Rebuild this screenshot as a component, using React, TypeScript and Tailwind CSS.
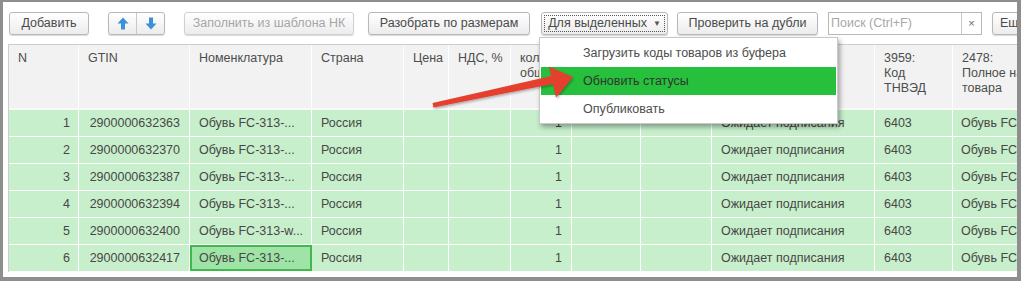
import React from "react";

const cols = [70, 111, 122, 92, 45, 62, 61, 69, 71, 163, 78, 200];

const headers: string[][] = [
  ["N"],
  ["GTIN"],
  ["Номенклатура"],
  ["Страна"],
  ["Цена"],
  ["НДС, %"],
  ["кол-во", "общее"],
  ["Сумма"],
  ["Сумма", "НДС"],
  ["Статус"],
  ["3959:", "Код", "ТНВЭД"],
  ["2478:", "Полное наименование", "товара"],
];

const rows = [
  ["1", "2900000632363", "Обувь FC-313-..."],
  ["2", "2900000632370", "Обувь FC-313-..."],
  ["3", "2900000632387", "Обувь FC-313-..."],
  ["4", "2900000632394", "Обувь FC-313-..."],
  ["5", "2900000632400", "Обувь FC-313-w..."],
  ["6", "2900000632417", "Обувь FC-313-..."],
];

function Btn({ children, className = "" }: { children: React.ReactNode; className?: string }) {
  return (
    <div
      className={
        "shrink-0 h-[23px] flex items-center justify-center rounded-[3px] border border-[#b8b8b8] bg-gradient-to-b from-[#ffffff] to-[#ececec] shadow-[0_1px_1px_rgba(0,0,0,0.15)] whitespace-nowrap " +
        className
      }
    >
      {children}
    </div>
  );
}

function ArrowIcon({ up }: { up: boolean }) {
  return (
    <svg width="12" height="13" viewBox="0 0 12 13" className={up ? "" : "rotate-180"}>
      <path d="M6 0.5 L11.5 6.5 L8 6.5 L8 12.5 L4 12.5 L4 6.5 L0.5 6.5 Z" fill="#3d8fd8" />
    </svg>
  );
}

export default function App() {
  return (
    <div className="w-[1024px] h-[283px] bg-white relative overflow-hidden" style={{ fontFamily: '"Liberation Sans", Arial, sans-serif' }}>
      <div className="w-[1021px] h-[281px] border-l-[3px] border-t-[2px] border-r-[4px] border-b-[4px] border-[#8e8e8e] bg-white relative overflow-hidden text-[12.5px] text-[#4a4a4a]">
        {/* Toolbar */}
        <div className="flex items-center pt-[10px] pl-[6px] h-[33px] w-[1100px]">
          <Btn className="w-[80px]">Добавить</Btn>
          <div className="shrink-0 ml-[19px] flex h-[23px] w-[57px] rounded-[3px] border border-[#b8b8b8] bg-gradient-to-b from-[#ffffff] to-[#ececec] shadow-[0_1px_1px_rgba(0,0,0,0.15)]">
            <div className="flex-1 flex items-center justify-center border-r border-[#c8c8c8]">
              <ArrowIcon up />
            </div>
            <div className="flex-1 flex items-center justify-center">
              <ArrowIcon up={false} />
            </div>
          </div>
          <Btn className="ml-[19px] w-[170px] text-[#a6a6a6] border-[#d0d0d0]">Заполнить из шаблона НК</Btn>
          <Btn className="ml-[14px] w-[162px]">Разобрать по размерам</Btn>
          <Btn className="ml-[11px] w-[127px] from-[#f4f4f4] to-[#e4e4e4] p-[2px]">
            <div className="w-full h-full flex items-center justify-center border border-dotted border-[#555]">
              Для выделенных
              <span className="ml-[6px] text-[8px] text-[#555]">▼</span>
            </div>
          </Btn>
          <Btn className="ml-[9px] w-[141px]">Проверить на дубли</Btn>
          <div className="shrink-0 ml-[10px] flex h-[23px] border border-[#b8b8b8] bg-white">
            <div className="w-[133px] flex items-center pl-[2px] text-[#a8a8a8] border-r border-[#c8c8c8]">Поиск (Ctrl+F)</div>
            <div className="w-[19px] flex items-center justify-center text-[11px] text-[#666]">×</div>
          </div>
          <Btn className="ml-[10px] w-[60px] justify-start pl-[7px]">Ещё</Btn>
        </div>

        {/* Table */}
        <div className="mt-[9px] ml-[5px] border-t border-l border-[#cdcdcd] overflow-hidden">
          <div className="flex h-[65px] bg-[#f2f2f2] border-b-2 border-[#fafafa]">
            {headers.map((h, i) => (
              <div
                key={i}
                className="shrink-0 border-r border-white pl-[9px] pt-[6px] leading-[15px] whitespace-nowrap overflow-hidden text-[#4d4d4d]"
                style={{ width: cols[i] }}
              >
                {h.map((l, j) => (
                  <div key={j}>{l}</div>
                ))}
              </div>
            ))}
          </div>
          {rows.map((r, ri) => (
            <div key={ri} className="flex h-[27px] bg-[#c7efcb] border-b border-white">
              {cols.map((w, ci) => {
                let content: React.ReactNode = null;
                let cls = "pl-[9px]";
                if (ci === 0) {
                  content = r[0];
                  cls = "justify-end pr-[8px]";
                } else if (ci === 1) {
                  content = r[1];
                  cls = "justify-end pr-[9px]";
                } else if (ci === 2) {
                  content = r[2];
                } else if (ci === 3) content = "Россия";
                else if (ci === 6) {
                  content = "1";
                  cls = "justify-end pr-[9px]";
                } else if (ci === 9) content = "Ожидает подписания";
                else if (ci === 10) content = "6403";
                else if (ci === 11) {
                  content = "Обувь FC-313-wmn-black-36";
                  cls = "pl-[8px]";
                }
                const selected = ri === 5 && ci === 2;
                return (
                  <div
                    key={ci}
                    className={
                      "shrink-0 flex items-center whitespace-nowrap overflow-hidden border-r border-white text-[#474747] " +
                      cls +
                      (selected ? " bg-[#9fe3a6] outline outline-2 -outline-offset-2 outline-[#3dba4b]" : "")
                    }
                    style={{ width: w }}
                  >
                    {content}
                  </div>
                );
              })}
            </div>
          ))}
        </div>

        {/* Dropdown menu */}
        <div className="absolute left-[536px] top-[35px] w-[299px] h-[87px] bg-white border border-[#c9c9c9] shadow-[2px_3px_5px_rgba(0,0,0,0.35)] py-[1px] px-[1px]">
          <div className="h-[28px] flex items-center pl-[42px] text-[#4d4d4d]">Загрузить коды товаров из буфера</div>
          <div className="h-[28px] flex items-center pl-[42px] bg-[#26c03c] text-[#333]">Обновить статусы</div>
          <div className="h-[28px] flex items-center pl-[42px] text-[#4d4d4d]">Опубликовать</div>
        </div>
      </div>

      {/* Red arrow annotation */}
      <svg className="absolute left-0 top-0 pointer-events-none" width="1024" height="283">
        <defs>
          <filter id="sh" x="-10%" y="-10%" width="120%" height="130%">
            <feDropShadow dx="1" dy="1.5" stdDeviation="1" floodColor="#000" floodOpacity="0.3" />
          </filter>
        </defs>
        <polygon
          points="432.6,103 551.2,76.1 549,66.5 573,77 556,97.5 552.8,83.9 433.4,107.5"
          fill="#e5402f"
          filter="url(#sh)"
        />
      </svg>
    </div>
  );
}
